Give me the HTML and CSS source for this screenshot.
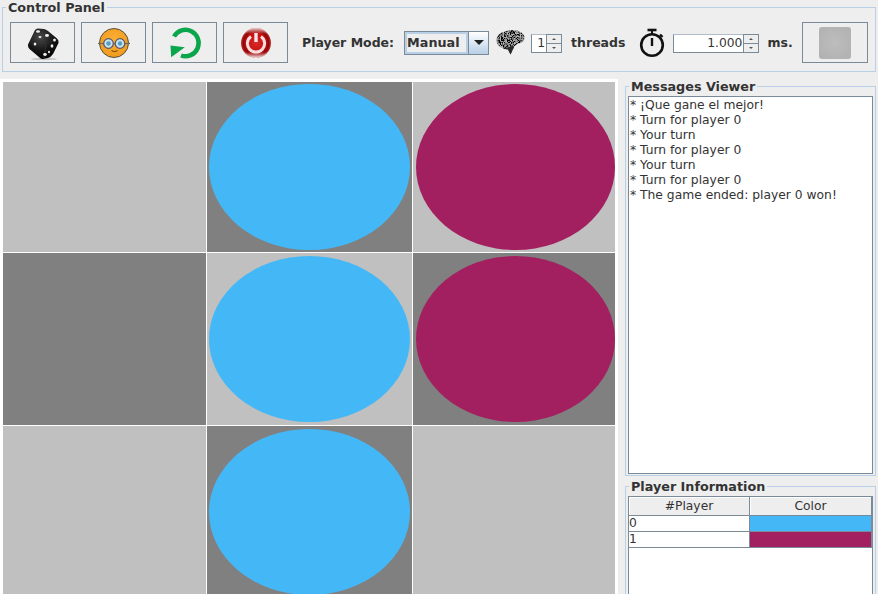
FILE: index.html
```html
<!DOCTYPE html>
<html lang="es">
<head>
<meta charset="utf-8"/>
<title>Control Panel</title>
<link rel="stylesheet" href="styles.css">
</head>
<body>
<fieldset class="group control">
  <legend>Control Panel</legend>
  <div class="toolbar">
    <button class="tool">
      <svg width="36" height="36" viewBox="0 0 36 36">
        <defs>
          <radialGradient id="die" cx="0.4" cy="0.3" r="0.8"><stop offset="0" stop-color="#4a4a4a"/><stop offset="0.55" stop-color="#141414"/><stop offset="1" stop-color="#000"/></radialGradient>
        </defs>
        <ellipse cx="19" cy="34" rx="13" ry="1.2" fill="#c4c4c4"/>
        <path d="M10 5 Q11 3.5 13 3.5 L19 4 Q21 4.5 23 6 L32 13.5 Q34 15 33.5 18 L28 29 Q26 32 23 33 L18 34 Q16 34 14.5 32.5 L4.5 24 Q2.5 22 3 19.5Z" fill="url(#die)"/>
        <path d="M10 14 L21 19 L19 33" fill="none" stroke="#333" stroke-width="0.8"/>
        <path d="M21 19 L32 14" fill="none" stroke="#2c2c2c" stroke-width="0.8"/>
        <g fill="#efefef">
          <ellipse cx="13" cy="6.5" rx="2" ry="1.3"/>
          <ellipse cx="22" cy="10.5" rx="2" ry="1.4"/>
          <ellipse cx="15" cy="12" rx="1.5" ry="1"/>
          <ellipse cx="29.5" cy="15" rx="1.4" ry="1.6"/>
          <ellipse cx="27" cy="21" rx="1.4" ry="1.7"/>
          <ellipse cx="24" cy="27" rx="1" ry="1.3"/>
          <ellipse cx="20" cy="29.5" rx="1.8" ry="1.4"/>
          <ellipse cx="10" cy="19" rx="1.3" ry="1.6"/>
        </g>
      </svg>
    </button>
    <button class="tool">
      <svg width="36" height="36" viewBox="0 0 36 36">
        <defs>
          <radialGradient id="face" cx="0.5" cy="0.4" r="0.6"><stop offset="0" stop-color="#fbb034"/><stop offset="1" stop-color="#f09a1d"/></radialGradient>
        </defs>
        <circle cx="18" cy="18" r="14.5" fill="url(#face)" stroke="#55503f" stroke-width="1"/>
        <path d="M2 18.5 H34" stroke="#6b6b60" stroke-width="1.2"/>
        <circle cx="12.5" cy="18.5" r="4.8" fill="#c6e3ef" stroke="#556" stroke-width="1.2"/>
        <circle cx="24" cy="18.5" r="4.8" fill="#c6e3ef" stroke="#556" stroke-width="1.2"/>
        <circle cx="12.5" cy="18.5" r="2.2" fill="#5a9cc0"/>
        <circle cx="24" cy="18.5" r="2.2" fill="#5a9cc0"/>
        <path d="M15.5 25.5 Q18.5 27.5 21.5 25.5" fill="none" stroke="#7a4a10" stroke-width="1.1"/>
      </svg>
    </button>
    <button class="tool">
      <svg width="36" height="36" viewBox="0 0 36 36">
        <path d="M7 11.5 A13.2 13.2 0 1 1 14 30.5" fill="none" stroke="#0aa64c" stroke-width="4.5"/>
        <path d="M3.5 20.5 L17.8 22.2 L4.2 32.2Z" fill="#0aa64c"/>
      </svg>
    </button>
    <button class="tool">
      <svg width="36" height="36" viewBox="0 0 36 36">
        <defs>
          <radialGradient id="power" cx="0.5" cy="0.5" r="0.5"><stop offset="0" stop-color="#d92a2a"/><stop offset="0.65" stop-color="#c50e0e"/><stop offset="0.85" stop-color="#8e0606"/><stop offset="1" stop-color="#b33"/></radialGradient>
          <linearGradient id="gloss" x1="0" y1="0" x2="0" y2="1"><stop offset="0" stop-color="#fff" stop-opacity="0.75"/><stop offset="0.2" stop-color="#fff" stop-opacity="0"/><stop offset="0.8" stop-color="#fff" stop-opacity="0"/><stop offset="1" stop-color="#fff" stop-opacity="0.85"/></linearGradient>
        </defs>
        <circle cx="18" cy="18" r="15" fill="url(#power)"/>
        <circle cx="18" cy="18" r="15" fill="url(#gloss)"/>
        <path d="M13 11.5 A8.6 8.6 0 1 0 23 11.5" fill="none" stroke="#f7dede" stroke-width="3"/>
        <path d="M18 8 V17" stroke="#f7e4e4" stroke-width="3.4"/>
      </svg>
    </button>

    <span class="label mode-label">Player Mode:</span>
    <div class="combo">
      <span class="combo-value">Manual</span>
      <span class="combo-arrow"></span>
    </div>

    <svg class="brain" width="30" height="27" viewBox="0 0 30 27">
      <defs>
        <filter id="wrinkle" x="0" y="0" width="100%" height="100%">
          <feTurbulence type="fractalNoise" baseFrequency="0.7" numOctaves="2" seed="4"/>
          <feColorMatrix values="0 0 0 0 0  0 0 0 0 0  0 0 0 0 0  3 3 0 0 -2.4"/>
          <feComposite in2="SourceAlpha" operator="in"/>
          <feMerge><feMergeNode in="SourceGraphic"/><feMergeNode/></feMerge>
        </filter>
      </defs>
      <path d="M0.5 11 Q1 5 7 3 Q14 0 21 1.5 Q28 3.5 28.5 8 Q28.5 13 24 14 Q20 15 18 18 L14.5 25.5 L12 20.5 Q8 20.5 5 18.5 Q0.5 16 0.5 11Z" fill="#b4b4b4" filter="url(#wrinkle)"/>
      <path d="M7 18 Q12 20 17 16 L18 18 L14.5 25.5 L12 20.5 Q9 20.5 7 18Z" fill="#2a2a2a"/>
    </svg>
    <div class="spinner small">
      <span class="spin-field">1</span>
      <span class="spin-btns"><span class="spin-up"></span><span class="spin-down"></span></span>
    </div>
    <span class="label threads">threads</span>

    <svg class="watch" width="26" height="30" viewBox="0 0 26 30">
      <path d="M8.5 2 H17.5" stroke="#111" stroke-width="2.6"/>
      <path d="M13 3 V6" stroke="#111" stroke-width="2"/>
      <path d="M21 6.5 L23.5 9" stroke="#111" stroke-width="2.4"/>
      <circle cx="13" cy="17" r="10.8" fill="none" stroke="#111" stroke-width="2.6"/>
      <path d="M13 10 V18" stroke="#111" stroke-width="2.4"/>
    </svg>
    <div class="spinner wide">
      <span class="spin-field">1.000</span>
      <span class="spin-btns"><span class="spin-up"></span><span class="spin-down"></span></span>
    </div>
    <span class="label ms">ms.</span>

    <button class="tool status"><span class="status-led"></span></button>
  </div>
</fieldset>

<div class="main">
  <div class="board">
    <div class="cell light"></div>
    <div class="cell dark"><span class="disc blue"></span></div>
    <div class="cell light"><span class="disc purple"></span></div>
    <div class="cell dark"></div>
    <div class="cell light"><span class="disc blue"></span></div>
    <div class="cell dark"><span class="disc purple"></span></div>
    <div class="cell light"></div>
    <div class="cell dark"><span class="disc blue"></span></div>
    <div class="cell light"></div>
  </div>

  <div class="side">
    <fieldset class="group">
      <legend>Messages Viewer</legend>
      <div class="messages">
        <div>* ¡Que gane el mejor!</div>
        <div>* Turn for player 0</div>
        <div>* Your turn</div>
        <div>* Turn for player 0</div>
        <div>* Your turn</div>
        <div>* Turn for player 0</div>
        <div>* The game ended: player 0 won!</div>
      </div>
    </fieldset>

    <fieldset class="group info">
      <legend>Player Information</legend>
      <div class="table-box">
        <table>
          <thead>
            <tr><th class="col-id">#Player</th><th>Color</th></tr>
          </thead>
          <tbody>
            <tr><td>0</td><td class="swatch blue"></td></tr>
            <tr><td>1</td><td class="swatch purple"></td></tr>
          </tbody>
        </table>
      </div>
    </fieldset>
  </div>
</div>
</body>
</html>
```

FILE: styles.css
```css
html, body {
  margin: 0;
  height: 594px;
  overflow: hidden;
}
body {
  background: #eeeeee;
  color: #333333;
  font-family: "DejaVu Sans", sans-serif;
  font-size: 12px;
}
.group {
  margin: 0;
  padding: 2px 2px 1px 2px;
  border: 1px solid #b8cfe5;
  min-width: 0;
}
.group legend {
  margin-left: 1px;
  padding: 0 2px;
  font-size: 12.75px;
  font-weight: bold;
  line-height: 15px;
  color: #333333;
}
.control {
  margin: 0 2px;
  padding: 7px 7px 8px 7px;
}
.control legend {
  margin-left: -4px;
}
.toolbar {
  display: flex;
  align-items: center;
  height: 41px;
}
.tool {
  width: 65px;
  height: 41px;
  margin: 0 6px 0 0;
  padding: 0;
  background: #eeeeee;
  border: 1px solid #7a8a99;
  display: flex;
  align-items: center;
  justify-content: center;
}
.label {
  font-size: 12.5px;
  font-weight: bold;
}
.mode-label {
  margin-left: 8px;
}
.combo {
  display: flex;
  width: 85px;
  height: 24px;
  box-sizing: border-box;
  margin-left: 10px;
  border: 1px solid #7a8a99;
}
.combo-value {
  flex: 1;
  border: 2px solid #b8cfe5;
  font-size: 12.75px;
  font-weight: bold;
  line-height: 18px;
  padding-left: 0;
}
.combo-arrow {
  width: 19px;
  border-left: 1px solid #7a8a99;
  background: linear-gradient(#ffffff, #b8cfe5);
  display: flex;
  align-items: center;
  justify-content: center;
}
.combo-arrow::after {
  content: "";
  border-left: 5px solid transparent;
  border-right: 5px solid transparent;
  border-top: 5px solid #222222;
}
.brain {
  margin-left: 7px;
}
.spinner {
  display: flex;
  height: 19px;
  margin-top: 1px;
}
.small {
  width: 31px;
  margin-left: 5px;
}
.wide {
  width: 86px;
  margin-left: 8px;
}
.spin-field {
  flex: 1;
  background: #ffffff;
  border: 1px solid #7a8a99;
  border-right: 0;
  border-top-color: #b0bcc8;
  font-size: 12.3px;
  line-height: 17px;
  text-align: right;
  padding-right: 1px;
}
.spin-btns {
  width: 16px;
  display: flex;
  flex-direction: column;
  box-sizing: border-box;
  border: 1px solid #7a8a99;
}
.spin-up, .spin-down {
  flex: 1;
  display: flex;
  align-items: center;
  justify-content: center;
  background: #eeeeee;
}
.spin-up {
  border-bottom: 1px solid #7a8a99;
}
.spin-up::after {
  content: "";
  border-left: 2px solid transparent;
  border-right: 2px solid transparent;
  border-bottom: 2px solid #555555;
}
.spin-down::after {
  content: "";
  border-left: 2px solid transparent;
  border-right: 2px solid transparent;
  border-top: 2px solid #555555;
}
.threads {
  margin-left: 9px;
}
.watch {
  margin-left: 14px;
}
.ms {
  margin-left: 8px;
}
.status {
  width: 66px;
  margin: 0 0 0 auto;
}
.status-led {
  width: 32px;
  height: 32px;
  border-radius: 3px;
  background: radial-gradient(#bdbdbd, #b0b0b0);
}

.main {
  display: flex;
  margin-top: 7px;
}
.board {
  width: 612px;
  flex: none;
  height: 515px;
  padding: 3px 3px 0 3px;
  background: #ffffff;
  display: grid;
  grid-template-columns: 203px 205px 202px;
  grid-template-rows: 170px 172px 172px;
  gap: 1px;
  overflow: hidden;
}
.cell {
  display: flex;
  align-items: center;
  justify-content: center;
  overflow: hidden;
}
.light {
  background: #c0c0c0;
}
.dark {
  background: #808080;
}
.disc {
  width: 201px;
  height: 166px;
  flex: none;
  border-radius: 50%;
}
.disc.purple {
  width: 199px;
  margin-left: 3px;
}
.blue {
  background: #44b8f7;
}
.purple {
  background: #a32060;
}

.side {
  width: 251px;
  margin-left: 7px;
}
.messages {
  height: 375px;
  background: #ffffff;
  border: 1px solid #7a8a99;
  padding: 1px 1px 0;
  font-size: 12.3px;
  line-height: 15px;
}
.info {
  margin-top: 3px;
}
.table-box {
  height: 120px;
  background: #ffffff;
  border: 1px solid #7a8a99;
}
table {
  width: 100%;
  border-collapse: collapse;
  table-layout: fixed;
  font-size: 12.3px;
}
.col-id {
  width: 120px;
}
th {
  height: 18px;
  padding: 0;
  background: #eeeeee;
  font-weight: normal;
  border-right: 1px solid #7a8a99;
  border-bottom: 1px solid #7a8a99;
  box-shadow: inset 1px 1px 0 #ffffff;
}
td {
  height: 15px;
  padding: 0;
  line-height: 15px;
  border-right: 1px solid #7a8a99;
  border-bottom: 1px solid #7a8a99;
}
```
